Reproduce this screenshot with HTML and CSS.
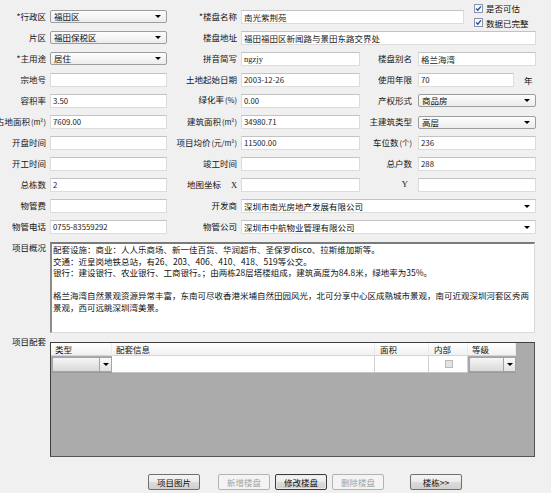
FILE: index.html
```html
<!DOCTYPE html>
<html lang="zh-CN">
<head>
<meta charset="utf-8">
<title>楼盘信息</title>
<link rel="stylesheet" href="styles.css">
</head>
<body>
<div class="form">
  <!-- row 1 -->
  <div class="lbl lead">*行政区</div>
  <div class="combo left"><span>福田区</span><i class="arr"></i></div>
  <div class="lbl mid">*楼盘名称</div>
  <div class="wide span4">
    <div class="fld name">南光紫荆苑</div>
    <div class="checks">
      <div class="chk"><span class="cb"><svg width="9" height="9" viewBox="0 0 9 9"><rect x="0.5" y="0.5" width="8" height="8" fill="#f4f7fb" stroke="#8a96a8"/><path d="M2.2 4.6 L3.8 6.3 L6.9 2.4" fill="none" stroke="#2c4f9e" stroke-width="1.4"/></svg></span>是否可估</div>
      <div class="chk"><span class="cb"><svg width="9" height="9" viewBox="0 0 9 9"><rect x="0.5" y="0.5" width="8" height="8" fill="#f4f7fb" stroke="#8a96a8"/><path d="M2.2 4.6 L3.8 6.3 L6.9 2.4" fill="none" stroke="#2c4f9e" stroke-width="1.4"/></svg></span>数据已完整</div>
    </div>
  </div>

  <!-- row 2 -->
  <div class="lbl lead">片区</div>
  <div class="combo left"><span>福田保税区</span><i class="arr"></i></div>
  <div class="lbl mid">楼盘地址</div>
  <div class="fld span3">福田福田区新闻路与景田东路交界处</div>

  <!-- row 3 -->
  <div class="lbl lead">*主用途</div>
  <div class="combo left"><span>居住</span><i class="arr"></i></div>
  <div class="lbl mid">拼音简写</div>
  <div class="fld n serif">ngzjy</div>
  <div class="lbl rgt">楼盘别名</div>
  <div class="fld">格兰海湾</div>

  <!-- row 4 -->
  <div class="lbl lead">宗地号</div>
  <div class="fld left"></div>
  <div class="lbl mid">土地起始日期</div>
  <div class="fld n">2003-12-26</div>
  <div class="lbl rgt">使用年限</div>
  <div class="yearcell span2"><div class="fld n short">70</div><span class="year">年</span></div>

  <!-- row 5 -->
  <div class="lbl lead">容积率</div>
  <div class="fld n left">3.50</div>
  <div class="lbl mid">绿化率<span class="unit">(%)</span></div>
  <div class="fld n">0.00</div>
  <div class="lbl rgt">产权形式</div>
  <div class="combo"><span>商品房</span><i class="arr"></i></div>

  <!-- row 6 -->
  <div class="lbl lead">占地面积<span class="unit">(m²)</span></div>
  <div class="fld n left">7609.00</div>
  <div class="lbl mid">建筑面积<span class="unit">(m²)</span></div>
  <div class="fld n">34980.71</div>
  <div class="lbl rgt">主建筑类型</div>
  <div class="combo"><span>高层</span><i class="arr"></i></div>

  <!-- row 7 -->
  <div class="lbl lead">开盘时间</div>
  <div class="fld left"></div>
  <div class="lbl mid">项目均价<span class="unit">(元/m²)</span></div>
  <div class="fld n">11500.00</div>
  <div class="lbl rgt">车位数<span class="unit">(个)</span></div>
  <div class="fld n">236</div>

  <!-- row 8 -->
  <div class="lbl lead">开工时间</div>
  <div class="fld left"></div>
  <div class="lbl mid">竣工时间</div>
  <div class="fld"></div>
  <div class="lbl rgt">总户数</div>
  <div class="fld n">288</div>

  <!-- row 9 -->
  <div class="lbl lead">总栋数</div>
  <div class="fld n left">2</div>
  <div class="lbl xy">地图坐标<span class="axis">X</span></div>
  <div class="fld"></div>
  <div class="lbl ylbl">Y</div>
  <div class="fld"></div>

  <!-- row 10 -->
  <div class="lbl lead">物管费</div>
  <div class="fld left"></div>
  <div class="lbl mid">开发商</div>
  <div class="ecombo span3"><span>深圳市南光房地产发展有限公司</span><i class="arr"></i></div>

  <!-- row 11 -->
  <div class="lbl lead">物管电话</div>
  <div class="fld n left">0755-83559292</div>
  <div class="lbl mid">物管公司</div>
  <div class="ecombo span3"><span>深圳市中航物业管理有限公司</span><i class="arr"></i></div>
</div>

<div class="sec memo-sec">
  <div class="sec-lbl">项目概况</div>
  <div class="memo">
    <p>配套设施：商业：人人乐商场、新一佳百货、华润超市、圣保罗disco、拉斯维加斯等。</p>
    <p>交通：近皇岗地铁总站，有26、203、406、410、418、519等公交。</p>
    <p>银行：建设银行、农业银行、工商银行。；由两栋28层塔楼组成，建筑高度为84.8米，绿地率为35%。</p>
    <p class="blank"></p>
    <p>格兰海湾自然景观资源异常丰富，东南可尽收香港米埔自然田园风光，北可分享中心区成熟城市景观，南可近观深圳河套区秀两</p>
    <p>景观，西可远眺深圳湾美景。</p>
  </div>
</div>

<div class="sec tbl-sec">
  <div class="sec-lbl">项目配套</div>
  <div class="grid-box">
    <div class="tgrid">
      <div class="th">类型</div>
      <div class="th">配套信息</div>
      <div class="th">面积</div>
      <div class="th">内部</div>
      <div class="th">等级</div>
      <div class="td"><div class="mcombo"><span class="mtext"></span><span class="mbtn"><i class="arr"></i></span></div></div>
      <div class="td white"></div>
      <div class="td white"></div>
      <div class="td white center"><span class="dcb"></span></div>
      <div class="td"><div class="mcombo"><span class="mtext"></span><span class="mbtn"><i class="arr"></i></span></div></div>
    </div>
  </div>
</div>

<div class="btns">
  <div class="btn">项目图片</div>
  <div class="btn dis gap1">新增楼盘</div>
  <div class="btn def gap2">修改楼盘</div>
  <div class="btn dis gap2">删除楼盘</div>
  <div class="btn gap3">楼栋&gt;&gt;</div>
</div>
</body>
</html>
```

FILE: styles.css
```css
* { box-sizing: border-box; margin: 0; padding: 0; }
html, body { background: #f0f0f0; }
body {
  width: 551px;
  height: 493px;
  overflow: hidden;
  font-family: "Noto Sans CJK SC", "Noto Sans", sans-serif;
  font-size: 8.5px;
  color: #111;
}

.form {
  display: grid;
  grid-template-columns: 46px 121px 74px 119px 58px 118px 15px;
  grid-template-rows: repeat(11, 21.1px);
  padding-top: 6px;
  align-items: center;
}

.lead { grid-column-start: 1; }
.span2 { grid-column: span 2; }
.span3 { grid-column: span 3; }
.span4 { grid-column: span 4; }

.lbl {
  display: flex;
  justify-content: flex-end;
  align-items: baseline;
  white-space: nowrap;
  line-height: 12px;
  padding-bottom: 2px;
  color: #151515;
}
.lbl.mid { padding-right: 4px; }
.lbl.rgt { padding-right: 6px; }
.lbl.ylbl { padding-right: 10px; font-family: "Liberation Serif", serif; }
.lbl.xy { padding-right: 0; }
.axis {
  margin-left: 10px;
  width: 10px;
  font-family: "Liberation Serif", serif;
}
.unit { font-size: 7.5px; margin-left: 1px; }

.fld {
  height: 14px;
  background: #fff;
  border: 1px solid #dcdcdc;
  border-top-color: #c3c3c3;
  line-height: 12px;
  padding-left: 2px;
  white-space: nowrap;
  overflow: hidden;
  color: #222;
}
.fld.n { font-size: 7.8px; }
.fld.serif { font-family: "Liberation Serif", serif; font-size: 8.5px; }
.fld.left, .combo.left { margin-left: 4px; }
.fld.name { width: 223px; flex: none; }
.fld.short { width: 96px; flex: none; }

.combo, .ecombo {
  height: 13px;
  display: flex;
  align-items: center;
  justify-content: space-between;
  padding: 0 5px 0 3px;
  line-height: 11px;
  white-space: nowrap;
}
.combo {
  border: 1px solid #9d9d9d;
  border-radius: 2px;
  background: linear-gradient(#fdfdfd, #ececec);
}
.ecombo {
  height: 14px;
  background: #fff;
  border: 1px solid #dcdcdc;
  border-top-color: #c3c3c3;
  padding-left: 2px;
}
.arr {
  width: 0;
  height: 0;
  border-left: 3px solid transparent;
  border-right: 3px solid transparent;
  border-top: 3px solid #000;
  flex: none;
}

.wide {
  align-self: stretch;
  display: flex;
  align-items: center;
}
.checks {
  align-self: flex-start;
  margin-top: -5px;
  margin-left: 10px;
  display: flex;
  flex-direction: column;
}
.chk {
  display: flex;
  align-items: center;
  height: 14.5px;
  white-space: nowrap;
}
.cb { display: flex; width: 9px; height: 9px; margin-right: 3px; }

.yearcell { display: flex; align-items: center; }
.year { margin-left: 10px; }

.sec { display: flex; align-items: flex-start; }
.sec-lbl {
  width: 46px;
  flex: none;
  display: flex;
  justify-content: flex-end;
  white-space: nowrap;
  line-height: 11px;
}
.memo-sec { margin-top: 4px; }
.memo {
  margin-left: 4px;
  width: 485px;
  height: 91px;
  background: #fff;
  border-top: 2px solid #7a7a7a;
  border-left: 2px solid #8c8c8c;
  border-right: 1px solid #d8d8d8;
  border-bottom: 1px solid #d8d8d8;
  padding-left: 1px;
  line-height: 11.5px;
  overflow: hidden;
}
.memo p { white-space: nowrap; height: 11.5px; }

.tbl-sec { margin-top: 1px; }
.tbl-sec .sec-lbl { margin-top: 2px; line-height: 10px; }
.grid-box {
  margin-left: 4px;
  margin-top: 8px;
  width: 485px;
  height: 115px;
  background: #ababab;
  border: 1px solid #555;
  border-top-color: #3f3f3f;
  border-left-color: #3f3f3f;
}
.tgrid {
  display: grid;
  grid-template-columns: 61px 263px 54px 39px 48px;
  grid-template-rows: 13px 17px;
  width: 465px;
}
.th {
  background: linear-gradient(#ffffff, #f1f1f1);
  border-bottom: 1px solid #d5d5d5;
  border-right: 1px solid #ececec;
  line-height: 12px;
  padding-left: 4px;
  white-space: nowrap;
}
.th:nth-child(3), .th:nth-child(4) { padding-left: 5px; }
.td {
  background: #ababab;
  border-bottom: 1px solid #9a9a9a;
  display: flex;
  align-items: center;
}
.td.white {
  background: #fff;
  border-right: 1px solid #cfcfcf;
  border-bottom-color: #c4c4c4;
}
.td.center { justify-content: center; }
.mcombo {
  margin: 0 0 0 1px;
  flex: 1;
  height: 15px;
  display: flex;
  border: 1px solid #a4a4a4;
  border-radius: 2px;
  background: linear-gradient(#f6f6f6, #d9d9d9);
}
.mtext { flex: 1; }
.mbtn {
  width: 12px;
  flex: none;
  border-left: 1px solid #a4a4a4;
  display: flex;
  align-items: center;
  justify-content: center;
  background: linear-gradient(#fafafa, #e2e2e2);
}
.dcb {
  width: 8px;
  height: 8px;
  border: 1px solid #b8b8b8;
  background: #e4e4e4;
  margin-left: 2px;
}

.btns {
  display: flex;
  margin-top: 17px;
  padding-left: 148px;
}
.btn {
  width: 52px;
  height: 16px;
  border: 1px solid #707070;
  border-radius: 2px;
  background: linear-gradient(#f4f4f4 0%, #ebebeb 50%, #dcdcdc 51%, #cfcfcf 100%);
  display: flex;
  align-items: center;
  justify-content: center;
  white-space: nowrap;
  color: #111;
}
.btn.dis {
  border-color: #b3b3b3;
  background: #f4f4f4;
  color: #a3a3a3;
}
.btn.def { border-color: #3c3c3c; box-shadow: inset 0 0 0 1px #e8e8e8; }
.gap1 { margin-left: 18px; }
.gap2 { margin-left: 5px; }
.gap3 { margin-left: 26px; }
```
